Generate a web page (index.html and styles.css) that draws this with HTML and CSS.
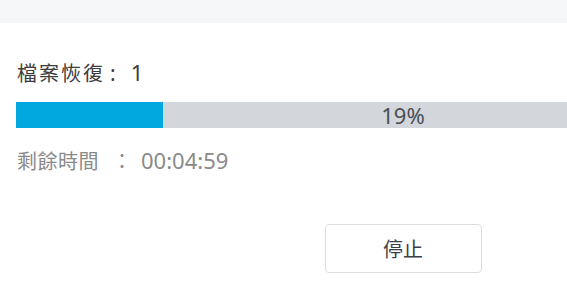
FILE: index.html
```html
<!DOCTYPE html>
<html lang="zh-Hant">
<head>
<meta charset="utf-8">
<link rel="stylesheet" href="styles.css">
</head>
<body>
<div class="page">
  <div class="header"></div>
  <div class="content">
    <div class="title"><span class="title-label">檔案恢復</span><span class="title-colon">:</span><span class="title-count">1</span></div>
    <div class="bar">
      <div class="fill" style="width:19%"></div>
      <div class="pct">19%</div>
    </div>
    <div class="time"><span class="label">剩餘時間</span><span class="colon">：</span><span class="value">00:04:59</span></div>
    <div class="actions">
      <button class="btn">停止</button>
    </div>
  </div>
</div>
</body>
</html>
```
FILE: styles.css
```css
html, body {
  margin: 0;
  padding: 0;
  background: #ffffff;
}
.page {
  width: 567px;
  height: 285px;
  overflow: hidden;
  font-family: "Noto Sans", "Noto Sans CJK TC", sans-serif;
}
.header {
  height: 23px;
  background: #f6f7f9;
}
.content {
  padding-left: 16px;
  width: 774px;
}
.title {
  margin-top: 36px;
  height: 26px;
  font-size: 20px;
  line-height: 26px;
  color: #3d3d3d;
  display: flex;
  align-items: baseline;
}
.title span {
  line-height: 26px;
}
.title-label {
  letter-spacing: 2px;
  padding-left: 1px;
}
.title-colon {
  margin-left: 5px;
  font-size: 21px;
}
.title-count {
  margin-left: 15px;
  font-size: 22px;
}
.bar {
  position: relative;
  margin-top: 17px;
  width: 774px;
  height: 26px;
  background: #d3d6db;
}
.fill {
  height: 100%;
  background: #00a8e0;
}
.pct {
  position: absolute;
  inset: 0;
  text-align: center;
  font-size: 22px;
  line-height: 26px;
  color: #4a4f57;
}
.time {
  margin-top: 19px;
  height: 26px;
  font-size: 20px;
  line-height: 26px;
  color: #8a8a8a;
  display: flex;
  align-items: baseline;
}
.time span {
  line-height: 26px;
}
.time .label {
  letter-spacing: 0.5px;
  padding-left: 1px;
}
.time .colon {
  margin-left: 13px;
}
.time .value {
  margin-left: 9px;
  font-size: 22px;
}
.actions {
  display: flex;
  justify-content: center;
  margin-top: 51px;
}
.btn {
  width: 157px;
  height: 49px;
  border: 1px solid #dcdde0;
  border-radius: 4px;
  background: #ffffff;
  font-family: "Noto Sans CJK TC", sans-serif;
  font-size: 20px;
  color: #3a3f47;
  padding: 0;
}
```
